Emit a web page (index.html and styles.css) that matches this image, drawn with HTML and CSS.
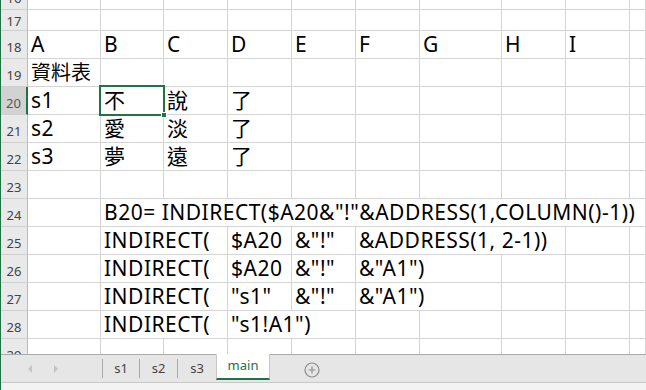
FILE: index.html
```html
<!DOCTYPE html>
<html lang="zh-Hant">
<head>
    <meta charset="UTF-8">
    <title>main</title>
    <link rel="stylesheet" href="styles.css">
</head>
<body>
    <div class="window">
        <div class="sheet">
            <div class="row r-top">
                <div class="rh">16</div>
                <div class="c wa"></div><div class="c wb"></div><div class="c w"></div><div class="c w"></div><div class="c w"></div><div class="c w"></div><div class="c wg"></div><div class="c w"></div><div class="c w"></div><div class="c fill"></div>
            </div>
            <div class="row r-short">
                <div class="rh">17</div>
                <div class="c wa"></div><div class="c wb"></div><div class="c w"></div><div class="c w"></div><div class="c w"></div><div class="c w"></div><div class="c wg"></div><div class="c w"></div><div class="c w"></div><div class="c fill"></div>
            </div>
            <div class="row">
                <div class="rh">18</div>
                <div class="c wa">A</div><div class="c wb">B</div><div class="c w">C</div><div class="c w">D</div><div class="c w">E</div><div class="c w">F</div><div class="c wg">G</div><div class="c w">H</div><div class="c w">I</div><div class="c fill"></div>
            </div>
            <div class="row">
                <div class="rh">19</div>
                <div class="c wa zh">資料表</div><div class="c wb"></div><div class="c w"></div><div class="c w"></div><div class="c w"></div><div class="c w"></div><div class="c wg"></div><div class="c w"></div><div class="c w"></div><div class="c fill"></div>
            </div>
            <div class="row">
                <div class="rh active">20</div>
                <div class="c wa">s1</div>
                <div class="c wb selected">不
                    <span class="sel"></span>
                    <span class="handle"></span>
                </div>
                <div class="c w">說</div><div class="c w">了</div><div class="c w"></div><div class="c w"></div><div class="c wg"></div><div class="c w"></div><div class="c w"></div><div class="c fill"></div>
            </div>
            <div class="row">
                <div class="rh">21</div>
                <div class="c wa">s2</div><div class="c wb">愛</div><div class="c w">淡</div><div class="c w">了</div><div class="c w"></div><div class="c w"></div><div class="c wg"></div><div class="c w"></div><div class="c w"></div><div class="c fill"></div>
            </div>
            <div class="row">
                <div class="rh">22</div>
                <div class="c wa">s3</div><div class="c wb">夢</div><div class="c w">遠</div><div class="c w">了</div><div class="c w"></div><div class="c w"></div><div class="c wg"></div><div class="c w"></div><div class="c w"></div><div class="c fill"></div>
            </div>
            <div class="row">
                <div class="rh">23</div>
                <div class="c wa"></div><div class="c wb"></div><div class="c w"></div><div class="c w"></div><div class="c w"></div><div class="c w"></div><div class="c wg"></div><div class="c w"></div><div class="c w"></div><div class="c fill"></div>
            </div>
            <div class="row">
                <div class="rh">24</div>
                <div class="c wa"></div><div class="c fill">B20= INDIRECT($A20&amp;"!"&amp;ADDRESS(1,COLUMN()-1))</div>
            </div>
            <div class="row">
                <div class="rh">25</div>
                <div class="c wa"></div><div class="c wbc">INDIRECT(</div><div class="c w">$A20</div><div class="c w">&amp;"!"</div><div class="c wfgh">&amp;ADDRESS(1, 2-1))</div><div class="c w"></div><div class="c fill"></div>
            </div>
            <div class="row">
                <div class="rh">26</div>
                <div class="c wa"></div><div class="c wbc">INDIRECT(</div><div class="c w">$A20</div><div class="c w">&amp;"!"</div><div class="c wfg">&amp;"A1")</div><div class="c w"></div><div class="c w"></div><div class="c fill"></div>
            </div>
            <div class="row">
                <div class="rh">27</div>
                <div class="c wa"></div><div class="c wbc">INDIRECT(</div><div class="c w">"s1"</div><div class="c w">&amp;"!"</div><div class="c wfg">&amp;"A1")</div><div class="c w"></div><div class="c w"></div><div class="c fill"></div>
            </div>
            <div class="row">
                <div class="rh">28</div>
                <div class="c wa"></div><div class="c wbc">INDIRECT(</div><div class="c wde">"s1!A1")</div><div class="c w"></div><div class="c wg"></div><div class="c w"></div><div class="c w"></div><div class="c fill"></div>
            </div>
            <div class="row r-last">
                <div class="rh">29</div>
                <div class="c wa"></div><div class="c wb"></div><div class="c w"></div><div class="c w"></div><div class="c w"></div><div class="c w"></div><div class="c wg"></div><div class="c w"></div><div class="c w"></div><div class="c fill"></div>
            </div>
        </div>

        <div class="tabbar">
            <div class="tab-nav">
                <span class="arrow left"></span>
                <span class="arrow right"></span>
            </div>
            <span class="sep"></span>
            <div class="tab t1">s1</div>
            <span class="sep"></span>
            <div class="tab t2">s2</div>
            <span class="sep"></span>
            <div class="tab t3">s3</div>
            <div class="tab current">main</div>
            <div class="add-sheet">
                <svg viewBox="0 0 16 16">
                    <circle cx="8" cy="8" r="7"/>
                    <path d="M8 4.5v7M4.5 8h7"/>
                </svg>
            </div>
        </div>
        <div class="status"></div>
    </div>
</body>
</html>
```

FILE: styles.css
```css
* {
    box-sizing: border-box;
    margin: 0;
    padding: 0;
}

body {
    width: 646px;
    height: 390px;
    overflow: hidden;
    background: #f3f3f3;
    font-family: 'Noto Sans', 'Noto Sans CJK TC', sans-serif;
}

.window {
    height: 390px;
    border-left: 1px solid #217346;
    display: flex;
    flex-direction: column;
}

/* ---- grid ---- */

.sheet {
    height: 354px;
    overflow: hidden;
    background: #fff;
    flex-shrink: 0;
}

.row {
    display: flex;
    height: 28px;
}

.row.r-top {
    height: 10px;
}

.row.r-short {
    height: 21px;
}

.rh {
    width: 27px;
    flex-shrink: 0;
    background: #e9e9e9;
    border-right: 1px solid #bcbcbc;
    border-bottom: 1px solid #cfcfcf;
    color: #444;
    font-size: 13px;
    line-height: 17px;
    display: flex;
    align-items: flex-end;
    justify-content: center;
    padding-bottom: 2px;
    overflow: hidden;
}

.r-short .rh {
    padding-bottom: 0;
}

.rh.active {
    background: #d2d2d2;
    border-right: 2px solid #217346;
    color: #555;
}

.c {
    flex-shrink: 0;
    height: 100%;
    border-right: 1px solid #d4d4d4;
    border-bottom: 1px solid #d4d4d4;
    padding-left: 3px;
    font-size: 21px;
    line-height: 27px;
    letter-spacing: 0.5px;
    color: #000;
    white-space: nowrap;
}

.c.zh {
    font-size: 20px;
    letter-spacing: 0;
}

.wa { width: 73px; }
.wb { width: 63px; }
.w { width: 64px; }
.wg { width: 82px; }
.wbc { width: 127px; }
.wde { width: 128px; }
.wfg { width: 146px; }
.wfgh { width: 210px; }

.fill {
    flex: 1;
}

.c.selected {
    position: relative;
}

.sel {
    position: absolute;
    left: -2px;
    top: -2px;
    width: 66px;
    height: 31px;
    border: 2px solid #217346;
}

.handle {
    position: absolute;
    left: 60px;
    top: 25px;
    width: 6px;
    height: 6px;
    background: #217346;
    border: 1px solid #fff;
}

/* ---- sheet tabs ---- */

.tabbar {
    height: 29px;
    flex-shrink: 0;
    background: #e6e6e6;
    border-top: 1px solid #ababab;
    border-bottom: 1px solid #c8c8c8;
    display: flex;
    align-items: center;
}

.tab-nav {
    width: 101px;
    height: 100%;
    display: flex;
    align-items: center;
    padding-left: 27px;
    gap: 22px;
}

.arrow {
    width: 0;
    height: 0;
    border-top: 4px solid transparent;
    border-bottom: 4px solid transparent;
}

.arrow.left {
    border-right: 4px solid #c4c4c4;
}

.arrow.right {
    border-left: 4px solid #c4c4c4;
}

.sep {
    width: 1px;
    height: 19px;
    background: #a8a8a8;
}

.tab {
    height: 100%;
    display: flex;
    align-items: center;
    justify-content: center;
    font-size: 13px;
    color: #444;
    padding-bottom: 2px;
}

.t1 { width: 36px; }
.t2 { width: 37px; }
.t3 { width: 38px; }

.tab.current {
    width: 54px;
    height: 26px;
    align-self: flex-start;
    background: #fff;
    color: #217346;
    border-left: 1px solid #c8c8c8;
    border-right: 1px solid #c8c8c8;
    border-bottom: 2px solid #217346;
    margin-top: -1px;
}

.add-sheet {
    margin-left: 34px;
    width: 16px;
    height: 16px;
}

.add-sheet svg {
    width: 16px;
    height: 16px;
    fill: none;
    stroke: #8c8c8c;
    stroke-width: 1.2;
}

.status {
    flex: 1;
    background: #f3f3f3;
}
```
